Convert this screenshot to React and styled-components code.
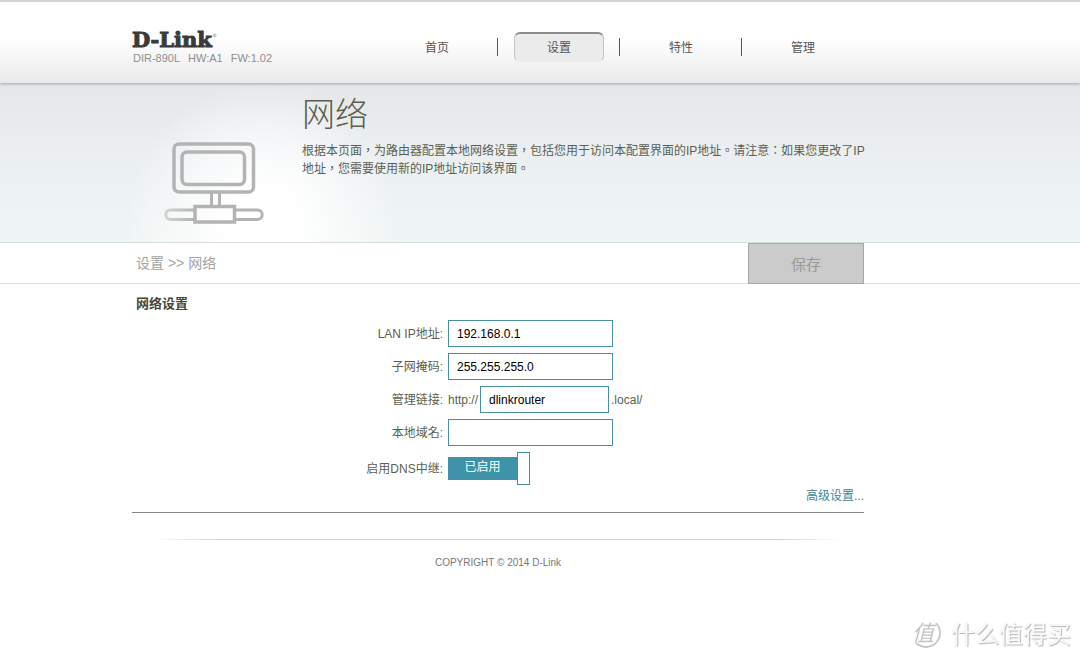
import React, { useState } from "react";
import styled, { createGlobalStyle } from "styled-components";

const GlobalStyle = createGlobalStyle`
  * {
    box-sizing: border-box;
  }
  body {
    margin: 0;
    background: #fff;
    color: #5b5f50;
    font-family: "Liberation Sans", "Noto Sans CJK TC", sans-serif;
    font-size: 12px;
    line-height: 18px;
  }
`;

// the content column sits a little left of the centre
const Band = styled.div`
  display: grid;
  grid-template-columns: minmax(12px, 11fr) minmax(0, 732px) minmax(12px, 18fr);

  > * {
    grid-column: 2;
  }
`;

const Header = styled.header`
  position: relative;
  border-top: 2px solid #d2d2d2;
  background: linear-gradient(#fff 0%, #fff 45%, #e9e9e9 100%);
  box-shadow: 0 1px 3px rgba(0, 0, 0, 0.3);
`;

const HeaderRow = styled.div`
  display: flex;
  justify-content: space-between;
  align-items: flex-start;
  padding: 28px 1px 17px 0;
`;

const Logo = styled.a`
  display: block;
  color: #3a3a3a;
  font-family: "DejaVu Serif", serif;
  font-size: 21px;
  font-weight: bold;
  line-height: 20px;
  text-decoration: none;
  -webkit-text-stroke: 1px #3a3a3a;

  sup {
    color: #999;
    font-size: 5px;
    line-height: 0;
    vertical-align: 10px;
    -webkit-text-stroke: 0;
  }
`;

const Versions = styled.div`
  display: flex;
  gap: 8px;
  padding-left: 1px;
  color: #8f8f8f;
  font-size: 11px;
  line-height: 16px;
`;

const Nav = styled.nav`
  display: flex;
  padding-top: 2px;
  font-family: "Liberation Sans", "Noto Sans CJK SC", sans-serif;
`;

const NavItem = styled.div`
  display: flex;
  align-items: center;
  width: 122px;

  &:before {
    content: "";
    width: 1px;
    height: 18px;
    margin-right: 16px;
    background: #555;
  }
  &:first-child:before {
    background: transparent;
  }
`;

const NavLink = styled.a`
  width: 90px;
  height: 30px;
  border: 1px solid transparent;
  border-top-width: 2px;
  border-radius: 6px;
  color: #555;
  line-height: 28px;
  text-align: center;
  text-decoration: none;
  ${({ $active }) =>
    $active &&
    `
    background: #ebebeb;
    border-color: #8c8c8c #c4c4c4 #ebebeb;
  `}
`;

const Hero = styled.section`
  border-bottom: 1px solid #d8dede;
  background: linear-gradient(#e5e7e9, #ebeff2 45%, #eff5f4);
`;

const HeroRow = styled.div`
  display: grid;
  grid-template-columns: 170px 1fr;
  min-height: 159px;
`;

const HeroArt = styled.div`
  margin-left: -30px;
  margin-right: -100px;
  padding: 58px 0 0 61px;
  background: radial-gradient(ellipse 136px 140px at 160px 140px, #fff 25%, rgba(255, 255, 255, 0));

  svg {
    display: block;
  }
`;

const HeroText = styled.div`
  position: relative;
  padding-top: 8px;

  p {
    margin: 0 -8px 0 0;
  }
`;

const Title = styled.h1`
  margin: 0 0 3px;
  color: #5b5f4c;
  font-size: 33px;
  font-weight: 300;
  line-height: 48px;
`;

const Toolbar = styled.div`
  border-bottom: 1px solid #dde0e0;
`;

const ToolbarRow = styled.div`
  display: flex;
  justify-content: space-between;
  align-items: center;
  height: 40px;
`;

const Breadcrumb = styled.div`
  padding-left: 4px;
  color: #a3a3a3;
  font-size: 14px;

  a {
    color: inherit;
    text-decoration: none;
  }
`;

const SaveButton = styled.button`
  align-self: flex-start;
  width: 116px;
  height: 41px;
  padding: 0;
  border: 1px solid #a3a8a8;
  background: #cbcbcb;
  color: #999;
  font-family: inherit;
  font-size: 15px;
`;

const Form = styled.form`
  display: flex;
  flex-direction: column;
  gap: 6px;
  padding-top: 11px;
  border-bottom: 1px solid #858585;
`;

const SectionTitle = styled.h2`
  margin: 0 0 1px;
  padding-left: 4px;
  color: #45483a;
  font-size: 13px;
  line-height: 18px;
`;

const Row = styled.div`
  display: grid;
  grid-template-columns: minmax(80px, 311px) 1fr;
  column-gap: 5px;
  align-items: center;

  > label:first-child {
    text-align: right;
  }
`;

const Field = styled.div`
  display: flex;
  align-items: center;
  gap: 2px;
`;

const TextInput = styled.input`
  width: ${({ $short }) => ($short ? 129 : 165)}px;
  height: 27px;
  padding: 0 8px;
  border: 1px solid #4a909c;
  background: #fff;
  color: #000;
  font-family: inherit;
  font-size: 12px;
  outline: none;
`;

const Switch = styled.label`
  position: relative;
  display: flex;
  align-items: center;
  cursor: pointer;

  input {
    position: absolute;
    inset: 0;
    width: 100%;
    height: 100%;
    margin: 0;
    opacity: 0;
    cursor: pointer;
  }
`;

const SwitchTrack = styled.span`
  order: ${({ $on }) => ($on ? 0 : 1)};
  width: 69px;
  height: 23px;
  background: ${({ $on }) => ($on ? "#3e93a8" : "#b5b5b5")};
  color: #fff;
  line-height: 20px;
  text-align: center;
`;

const SwitchKnob = styled.span`
  width: 13px;
  height: 33px;
  border: 1px solid #4a909c;
  background: #fff;
`;

const Advanced = styled.a`
  align-self: flex-end;
  margin-top: -4px;
  padding-bottom: 7px;
  color: #3d8797;
  text-decoration: none;
`;

const Footer = styled.footer`
  padding: 26px 0 20px;
  color: #777;
  font-size: 10px;
  text-align: center;

  &:before {
    content: "";
    display: block;
    height: 1px;
    margin: 0 20px 14px;
    background: linear-gradient(90deg, transparent, #d0d0d0 10%, #d0d0d0 90%, transparent);
  }
`;

const Watermark = styled.div`
  position: fixed;
  right: 9px;
  bottom: 11px;
  display: flex;
  align-items: center;
  gap: 10px;
  color: #fafafa;
  font-family: "Noto Sans CJK SC", sans-serif;
  font-size: 24px;
  line-height: 30px;
  text-shadow: 1px 1px 1px #b4b4b4, 0 0 1px #ddd;
  pointer-events: none;
`;

const Stamp = styled.span`
  width: 30px;
  height: 30px;
  border: 2px solid transparent;
  border-right-color: #ccc;
  border-bottom-color: #c4c4c4;
  border-radius: 50%;
  color: #c4c4c4;
  font-size: 22px;
  font-style: italic;
  line-height: 22px;
  text-indent: -1px;
  text-shadow: none;
`;

function NetworkIcon() {
  return (
    <svg width="102" height="84" viewBox="0 0 102 84" fill="none" stroke="#b3b3b3" strokeWidth="3.5">
      <defs>
        <linearGradient id="cable" gradientUnits="userSpaceOnUse" x1="1" y1="0" x2="32" y2="0">
          <stop offset="0" stopColor="#d2d4d4" />
          <stop offset="1" stopColor="#b3b3b3" />
        </linearGradient>
      </defs>
      <rect x="11" y="3" width="79.500" height="48" rx="5" />
      <rect x="19" y="11" width="62.500" height="32.500" rx="5" />
      <path d="M48.500 51v14M56.500 51v14" strokeWidth="3" />
      <rect x="32" y="65.500" width="39.500" height="15.500" />
      <path d="M31 69H7.500a4.700 4.700 0 0 0 0 9.400H31" stroke="url(#cable)" strokeWidth="3" />
      <path d="M72 69h22.500a4.700 4.700 0 0 1 0 9.400H72" strokeWidth="3" />
    </svg>
  );
}

const MENU = ["首页", "设置", "特性", "管理"];

export default function App() {
  const [relay, setRelay] = useState(true);

  return (
    <>
      <GlobalStyle />
      <Header>
        <Band>
          <HeaderRow>
            <div>
              <Logo href="#">
                D-Link<sup>®</sup>
              </Logo>
              <Versions>
                <span>DIR-890L</span>
                <span>HW:A1</span>
                <span>FW:1.02</span>
              </Versions>
            </div>
            <Nav>
              {MENU.map((name) => (
                <NavItem key={name}>
                  <NavLink href="#" $active={name === "设置"}>
                    {name}
                  </NavLink>
                </NavItem>
              ))}
            </Nav>
          </HeaderRow>
        </Band>
      </Header>

      <Hero>
        <Band>
          <HeroRow>
            <HeroArt>
              <NetworkIcon />
            </HeroArt>
            <HeroText>
              <Title>网络</Title>
              <p>
                根据本页面，为路由器配置本地网络设置，包括您用于访问本配置界面的IP地址。请注意：如果您更改了IP地址，您需要使用新的IP地址访问该界面。
              </p>
            </HeroText>
          </HeroRow>
        </Band>
      </Hero>

      <Toolbar>
        <Band>
          <ToolbarRow>
            <Breadcrumb>
              <a href="#">设置</a> &gt;&gt; 网络
            </Breadcrumb>
            <SaveButton type="submit" form="network" disabled>
              保存
            </SaveButton>
          </ToolbarRow>
        </Band>
      </Toolbar>

      <Band>
        <Form id="network" onSubmit={(e) => e.preventDefault()}>
          <SectionTitle>网络设置</SectionTitle>
          <Row>
            <label htmlFor="lan-ip">LAN IP地址:</label>
            <TextInput id="lan-ip" defaultValue="192.168.0.1" />
          </Row>
          <Row>
            <label htmlFor="mask">子网掩码:</label>
            <TextInput id="mask" defaultValue="255.255.255.0" />
          </Row>
          <Row>
            <label htmlFor="link">管理链接:</label>
            <Field>
              <span>http://</span>
              <TextInput id="link" $short defaultValue="dlinkrouter" />
              <span>.local/</span>
            </Field>
          </Row>
          <Row>
            <label htmlFor="domain">本地域名:</label>
            <TextInput id="domain" />
          </Row>
          <Row>
            <label htmlFor="relay">启用DNS中继:</label>
            <Field>
              <Switch>
                <input
                  id="relay"
                  type="checkbox"
                  checked={relay}
                  onChange={(e) => setRelay(e.target.checked)}
                />
                <SwitchTrack $on={relay}>{relay ? "已启用" : "已禁用"}</SwitchTrack>
                <SwitchKnob />
              </Switch>
            </Field>
          </Row>
          <Advanced href="#">高级设置...</Advanced>
        </Form>
        <Footer>COPYRIGHT © 2014 D-Link</Footer>
      </Band>

      <Watermark>
        <Stamp>值</Stamp>
        什么值得买
      </Watermark>
    </>
  );
}
